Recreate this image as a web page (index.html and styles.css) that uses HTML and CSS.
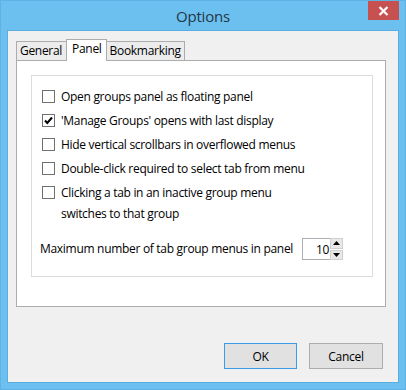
FILE: index.html
```html
<!DOCTYPE html>
<html lang="en">
<head>
  <meta charset="UTF-8" />
  <title>Options</title>
  <link rel="stylesheet" href="styles.css">
</head>
<body>

  <div class="window">
    <div class="titlebar">
      <span class="title">Options</span>
      <div class="close-btn">
        <svg width="11" height="10" viewBox="0 0 11 10"><path d="M1.5 1 L9.5 9 M9.5 1 L1.5 9" stroke="#fff" stroke-width="2.2"/></svg>
      </div>
    </div>

    <div class="client">
      <div class="tabs">
        <div class="tab">General</div>
        <div class="tab active">Panel</div>
        <div class="tab">Bookmarking</div>
      </div>

      <div class="tab-page">
        <div class="group">
          <label class="option">
            <span class="check"></span>
            <span>Open groups panel as floating panel</span>
          </label>
          <label class="option">
            <span class="check">
              <svg width="11" height="11" viewBox="0 0 11 11"><path d="M2 5.5 L4.3 8 L9 2.5" fill="none" stroke="#000" stroke-width="2"/></svg>
            </span>
            <span>'Manage Groups' opens with last display</span>
          </label>
          <label class="option">
            <span class="check"></span>
            <span>Hide vertical scrollbars in overflowed menus</span>
          </label>
          <label class="option">
            <span class="check"></span>
            <span>Double-click required to select tab from menu</span>
          </label>
          <label class="option">
            <span class="check"></span>
            <span>Clicking a tab in an inactive group menu<br>switches to that group</span>
          </label>

          <div class="max-row">
            <span>Maximum number of tab group menus in panel</span>
            <div class="spinner">
              <div class="spin-value">10</div>
              <div class="spin-btns">
                <div class="spin-btn"><svg width="7" height="4" viewBox="0 0 7 4"><path d="M0 4 L3.5 0 L7 4 Z" fill="#000"/></svg></div>
                <div class="spin-btn"><svg width="7" height="4" viewBox="0 0 7 4"><path d="M0 0 L7 0 L3.5 4 Z" fill="#000"/></svg></div>
              </div>
            </div>
          </div>
        </div>
      </div>

      <div class="buttons">
        <button class="btn default">OK</button>
        <button class="btn">Cancel</button>
      </div>
    </div>
  </div>

</body>
</html>
```

FILE: styles.css
```css
body {
  margin: 0;
  font-family: 'Open Sans', 'Noto Sans', sans-serif;
  font-size: 12px;
  letter-spacing: -0.3px;
  color: #000;
}

.window {
  width: 406px;
  height: 390px;
  box-sizing: border-box;
  background-color: #6bc0ef;
  border: 1px solid #5eb3e4;
  padding: 0 6px 6px 6px;
  display: flex;
  flex-direction: column;
}

.titlebar {
  position: relative;
  height: 29px;
  display: flex;
  align-items: center;
  justify-content: center;
}

.title {
  font-size: 15px;
  letter-spacing: -0.2px;
  color: #263645;
  margin-top: 1px;
}

.close-btn {
  position: absolute;
  top: 0;
  right: 0;
  width: 31px;
  height: 19px;
  background-color: #c75050;
  display: flex;
  align-items: center;
  justify-content: center;
}

.client {
  flex: 1;
  background-color: #f0f0f0;
  border: 1px solid #59ade0;
  padding: 8px 12px 13px 8px;
  display: flex;
  flex-direction: column;
}

.tabs {
  display: flex;
  align-items: flex-end;
  height: 21px;
}

.tab {
  height: 18px;
  line-height: 17px;
  padding: 0 3px 0 3px;
  border: 1px solid #acacac;
  border-bottom: none;
  background-color: #ececec;
  margin-left: -1px;
}

.tab:first-child {
  margin-left: 0;
  padding-right: 4px;
}

.tab.active {
  position: relative;
  z-index: 1;
  height: 21px;
  line-height: 18px;
  margin-bottom: -1px;
  padding: 0 4px 0 5px;
  background-color: #fff;
}

.tab-page {
  width: 370px;
  box-sizing: border-box;
  background-color: #fff;
  border: 1px solid #acacac;
  padding: 14px 12px 29px 14px;
}

.group {
  border: 1px solid #dcdcdc;
  padding: 10px 8px 16px 8px;
  display: flex;
  flex-direction: column;
  gap: 3px;
}

.option {
  display: flex;
  align-items: flex-start;
  gap: 6px;
  margin-left: 2px;
  line-height: 21px;
}

.check {
  flex: none;
  width: 11px;
  height: 11px;
  margin-top: 4px;
  border: 1px solid #707070;
  background-color: #fff;
  display: flex;
  align-items: center;
  justify-content: center;
}

.max-row {
  display: flex;
  align-items: center;
  gap: 9px;
  margin-top: 11px;
  line-height: 22px;
}

.spinner {
  display: flex;
  height: 22px;
}

.spin-value {
  width: 26px;
  height: 20px;
  line-height: 21px;
  border: 1px solid #abadb3;
  border-right: none;
  text-align: right;
  padding-right: 1px;
}

.spin-btns {
  display: flex;
  flex-direction: column;
  gap: 1px;
  width: 13px;
  background-color: #fff;
}

.spin-btn {
  flex: 1;
  background-color: #e8e8e8;
  border: 1px solid #d0d0d0;
  display: flex;
  align-items: center;
  justify-content: center;
}

.buttons {
  margin-top: auto;
  display: flex;
  justify-content: flex-end;
  gap: 12px;
  padding-right: 3px;
}

.btn {
  width: 74px;
  height: 26px;
  font-family: inherit;
  font-size: 12px;
  letter-spacing: inherit;
  background-color: #e1e1e1;
  border: 1px solid #adadad;
  padding: 0;
}

.btn.default {
  width: 73px;
  border-color: #3c9ae8;
}
```
